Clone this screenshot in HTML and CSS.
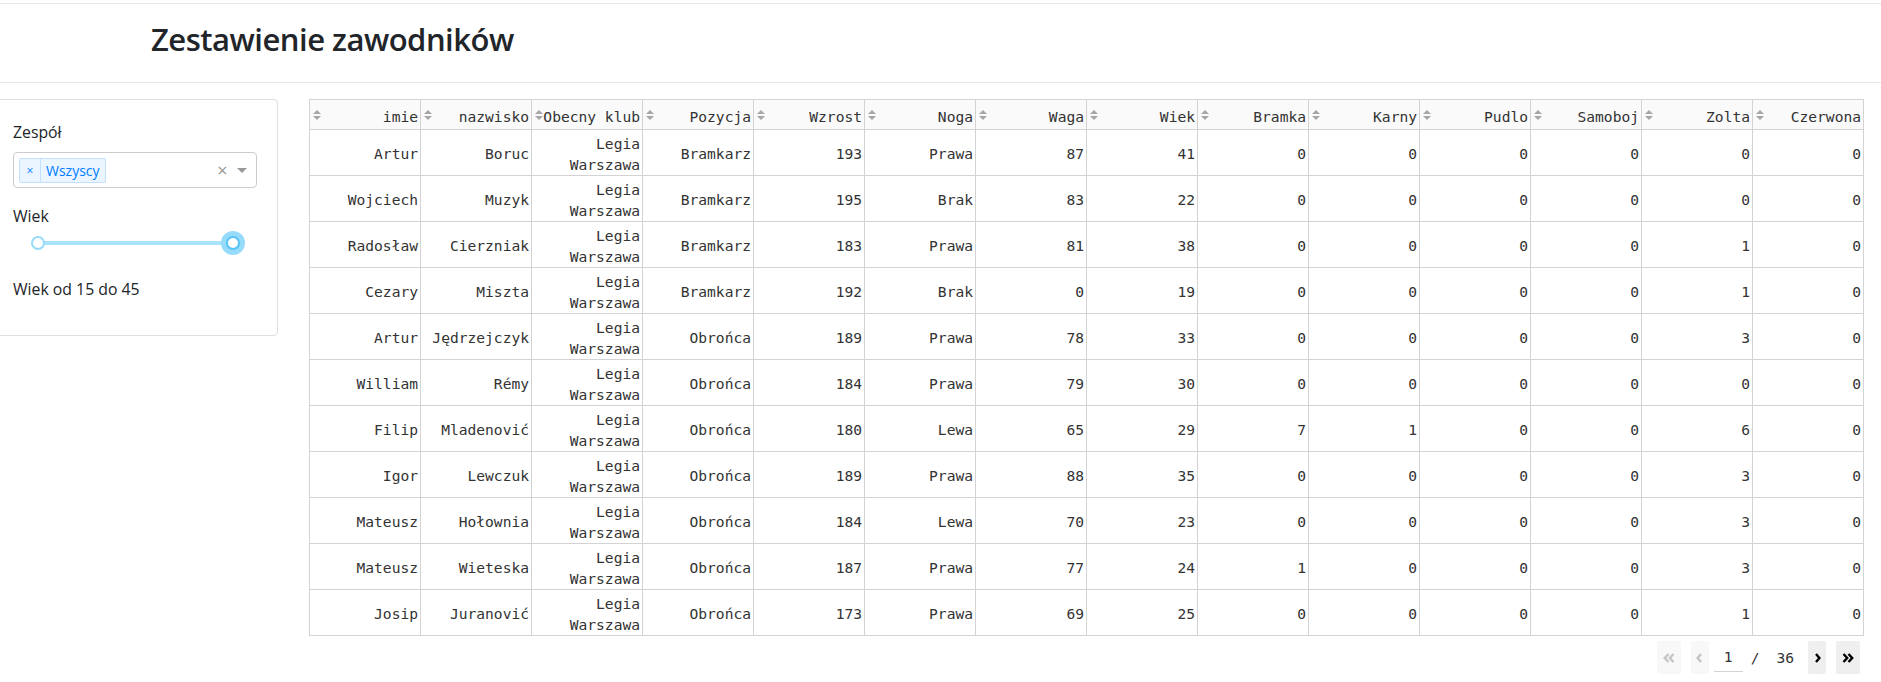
FILE: index.html
```html
<!DOCTYPE html>
<html lang="pl">
<head>
<meta charset="utf-8">
<title>Zestawienie zawodników</title>
<link rel="stylesheet" href="styles.css">
</head>
<body>
<header class="header">
  <h2 class="title">Zestawienie zawodników</h2>
</header>
<main class="main">
  <aside class="card">
    <div class="label">Zespół</div>
    <div class="select">
      <div class="select-values">
        <span class="tag"><span class="tag-x">×</span><span class="tag-label">Wszyscy</span></span>
      </div>
      <span class="select-clear">×</span>
      <span class="select-arrow"></span>
    </div>
    <div class="label label-wiek">Wiek</div>
    <div class="slider">
      <span class="handle"></span>
      <span class="slider-track"></span>
      <span class="handle handle-focus"></span>
    </div>
    <p class="range-text">Wiek od 15 do 45</p>
  </aside>
  <section class="table-area">
    <table class="grid">
      <thead>
        <tr>
          <th><div class="th-inner"><svg class="sort" viewBox="0 0 8 10"><path d="M4 0 L8 4 H0 Z M0 6 H8 L4 10 Z"/></svg><span>imie</span></div></th>
          <th><div class="th-inner"><svg class="sort" viewBox="0 0 8 10"><path d="M4 0 L8 4 H0 Z M0 6 H8 L4 10 Z"/></svg><span>nazwisko</span></div></th>
          <th><div class="th-inner"><svg class="sort" viewBox="0 0 8 10"><path d="M4 0 L8 4 H0 Z M0 6 H8 L4 10 Z"/></svg><span>Obecny klub</span></div></th>
          <th><div class="th-inner"><svg class="sort" viewBox="0 0 8 10"><path d="M4 0 L8 4 H0 Z M0 6 H8 L4 10 Z"/></svg><span>Pozycja</span></div></th>
          <th><div class="th-inner"><svg class="sort" viewBox="0 0 8 10"><path d="M4 0 L8 4 H0 Z M0 6 H8 L4 10 Z"/></svg><span>Wzrost</span></div></th>
          <th><div class="th-inner"><svg class="sort" viewBox="0 0 8 10"><path d="M4 0 L8 4 H0 Z M0 6 H8 L4 10 Z"/></svg><span>Noga</span></div></th>
          <th><div class="th-inner"><svg class="sort" viewBox="0 0 8 10"><path d="M4 0 L8 4 H0 Z M0 6 H8 L4 10 Z"/></svg><span>Waga</span></div></th>
          <th><div class="th-inner"><svg class="sort" viewBox="0 0 8 10"><path d="M4 0 L8 4 H0 Z M0 6 H8 L4 10 Z"/></svg><span>Wiek</span></div></th>
          <th><div class="th-inner"><svg class="sort" viewBox="0 0 8 10"><path d="M4 0 L8 4 H0 Z M0 6 H8 L4 10 Z"/></svg><span>Bramka</span></div></th>
          <th><div class="th-inner"><svg class="sort" viewBox="0 0 8 10"><path d="M4 0 L8 4 H0 Z M0 6 H8 L4 10 Z"/></svg><span>Karny</span></div></th>
          <th><div class="th-inner"><svg class="sort" viewBox="0 0 8 10"><path d="M4 0 L8 4 H0 Z M0 6 H8 L4 10 Z"/></svg><span>Pudlo</span></div></th>
          <th><div class="th-inner"><svg class="sort" viewBox="0 0 8 10"><path d="M4 0 L8 4 H0 Z M0 6 H8 L4 10 Z"/></svg><span>Samoboj</span></div></th>
          <th><div class="th-inner"><svg class="sort" viewBox="0 0 8 10"><path d="M4 0 L8 4 H0 Z M0 6 H8 L4 10 Z"/></svg><span>Zolta</span></div></th>
          <th><div class="th-inner"><svg class="sort" viewBox="0 0 8 10"><path d="M4 0 L8 4 H0 Z M0 6 H8 L4 10 Z"/></svg><span>Czerwona</span></div></th>
        </tr>
      </thead>
      <tbody>
        <tr><td>Artur</td><td>Boruc</td><td>Legia Warszawa</td><td>Bramkarz</td><td>193</td><td>Prawa</td><td>87</td><td>41</td><td>0</td><td>0</td><td>0</td><td>0</td><td>0</td><td>0</td></tr>
        <tr><td>Wojciech</td><td>Muzyk</td><td>Legia Warszawa</td><td>Bramkarz</td><td>195</td><td>Brak</td><td>83</td><td>22</td><td>0</td><td>0</td><td>0</td><td>0</td><td>0</td><td>0</td></tr>
        <tr><td>Radosław</td><td>Cierzniak</td><td>Legia Warszawa</td><td>Bramkarz</td><td>183</td><td>Prawa</td><td>81</td><td>38</td><td>0</td><td>0</td><td>0</td><td>0</td><td>1</td><td>0</td></tr>
        <tr><td>Cezary</td><td>Miszta</td><td>Legia Warszawa</td><td>Bramkarz</td><td>192</td><td>Brak</td><td>0</td><td>19</td><td>0</td><td>0</td><td>0</td><td>0</td><td>1</td><td>0</td></tr>
        <tr><td>Artur</td><td>Jędrzejczyk</td><td>Legia Warszawa</td><td>Obrońca</td><td>189</td><td>Prawa</td><td>78</td><td>33</td><td>0</td><td>0</td><td>0</td><td>0</td><td>3</td><td>0</td></tr>
        <tr><td>William</td><td>Rémy</td><td>Legia Warszawa</td><td>Obrońca</td><td>184</td><td>Prawa</td><td>79</td><td>30</td><td>0</td><td>0</td><td>0</td><td>0</td><td>0</td><td>0</td></tr>
        <tr><td>Filip</td><td>Mladenović</td><td>Legia Warszawa</td><td>Obrońca</td><td>180</td><td>Lewa</td><td>65</td><td>29</td><td>7</td><td>1</td><td>0</td><td>0</td><td>6</td><td>0</td></tr>
        <tr><td>Igor</td><td>Lewczuk</td><td>Legia Warszawa</td><td>Obrońca</td><td>189</td><td>Prawa</td><td>88</td><td>35</td><td>0</td><td>0</td><td>0</td><td>0</td><td>3</td><td>0</td></tr>
        <tr><td>Mateusz</td><td>Hołownia</td><td>Legia Warszawa</td><td>Obrońca</td><td>184</td><td>Lewa</td><td>70</td><td>23</td><td>0</td><td>0</td><td>0</td><td>0</td><td>3</td><td>0</td></tr>
        <tr><td>Mateusz</td><td>Wieteska</td><td>Legia Warszawa</td><td>Obrońca</td><td>187</td><td>Prawa</td><td>77</td><td>24</td><td>1</td><td>0</td><td>0</td><td>0</td><td>3</td><td>0</td></tr>
        <tr><td>Josip</td><td>Juranović</td><td>Legia Warszawa</td><td>Obrońca</td><td>173</td><td>Prawa</td><td>69</td><td>25</td><td>0</td><td>0</td><td>0</td><td>0</td><td>1</td><td>0</td></tr>
      </tbody>
    </table>
    <nav class="pager">
      <button class="pg-btn pg-wide pg-disabled" type="button"><svg viewBox="0 0 12 10" class="ico-dbl"><path d="M5.5 1 L1.8 5 L5.5 9 M10.5 1 L6.8 5 L10.5 9"/></svg></button>
      <button class="pg-btn pg-narrow pg-disabled pg-prev" type="button"><svg viewBox="0 0 7 10" class="ico-one"><path d="M5 1 L1.6 5 L5 9"/></svg></button>
      <span class="pg-current">1</span>
      <span class="pg-sep">/</span>
      <span class="pg-total">36</span>
      <button class="pg-btn pg-narrow pg-next" type="button"><svg viewBox="0 0 7 10" class="ico-one"><path d="M2 1 L5.4 5 L2 9"/></svg></button>
      <button class="pg-btn pg-wide pg-last" type="button"><svg viewBox="0 0 12 10" class="ico-dbl"><path d="M1.5 1 L5.2 5 L1.5 9 M6.5 1 L10.2 5 L6.5 9"/></svg></button>
    </nav>
  </section>
</main>
</body>
</html>
```

FILE: styles.css
```css
html, body {
  margin: 0;
  padding: 0;
  background: #fff;
}

body {
  font-family: "Open Sans", "Noto Sans", sans-serif;
  color: #212529;
  overflow: hidden;
}

.header {
  margin-top: 3px;
  height: 78px;
  border-top: 1px solid #e6e6e6;
  border-bottom: 1px solid #e6e6e6;
}

.title {
  margin: 0;
  padding: 16px 0 0 151px;
  font-size: 31px;
  font-weight: 600;
  line-height: 38px;
  letter-spacing: -0.5px;
  color: #212529;
}

.main {
  display: flex;
  align-items: flex-start;
  padding-top: 16px;
}

.card {
  flex: none;
  box-sizing: border-box;
  width: 284px;
  height: 237px;
  margin-left: -6px;
  padding: 21px 20px 0 18px;
  border: 1px solid #dfdfdf;
  border-radius: 4px;
  font-size: 15.8px;
}

.label {
  line-height: 22px;
}

.select {
  display: flex;
  align-items: flex-start;
  box-sizing: border-box;
  height: 36px;
  margin-top: 9px;
  border: 1px solid #cccccc;
  border-radius: 4px;
}

.select-values {
  flex: 1;
  padding: 5px 0 0 5px;
}

.tag {
  display: inline-flex;
  border: 1px solid #c2e0ff;
  border-radius: 2px;
  background: #ebf5ff;
  color: #007eff;
  font-size: 14px;
  line-height: 19px;
}

.tag-x {
  width: 10px;
  padding: 2px 5px;
  text-align: center;
  font-size: 12px;
  border-right: 1px solid #c2e0ff;
}

.tag-label {
  padding: 2px 5px;
}

.select-clear {
  align-self: center;
  width: 17px;
  text-align: center;
  font-size: 18px;
  line-height: 18px;
  color: #999;
}

.select-arrow {
  align-self: center;
  width: 0;
  height: 0;
  margin: 3px 9px 0 6px;
  border-style: solid;
  border-width: 5px 5px 2.5px;
  border-color: #999 transparent transparent;
}

.label-wiek {
  margin-top: 17px;
}

.slider {
  display: flex;
  align-items: center;
  width: 209px;
  height: 24px;
  margin: 4px 0 0 18px;
}

.handle {
  position: relative;
  z-index: 1;
  flex: none;
  box-sizing: border-box;
  width: 14px;
  height: 14px;
  border: 2px solid #96dbfa;
  border-radius: 50%;
  background: #fff;
}

.handle-focus {
  border-color: #57c5f7;
  box-shadow: 0 0 0 5px #96dbfa;
}

.slider-track {
  flex: 1;
  height: 4px;
  margin: 0 -7px;
  border-radius: 4px;
  background: #abe2fb;
}

.range-text {
  margin: 23px 0 0;
  line-height: 22px;
}

.table-area {
  flex: none;
  margin-left: 31px;
  width: 1555px;
}

.grid {
  table-layout: fixed;
  width: 1555px;
  border-collapse: separate;
  border-spacing: 0;
  border-top: 1px solid #d3d3d3;
  border-left: 1px solid #d3d3d3;
  font-family: "DejaVu Sans Mono", "Liberation Mono", monospace;
  font-size: 14.6px;
  color: #333333;
}

.grid th,
.grid td {
  box-sizing: border-box;
  width: 111px;
  padding: 4px 2px 0 2px;
  border-right: 1px solid #d3d3d3;
  border-bottom: 1px solid #d3d3d3;
  text-align: right;
  vertical-align: middle;
}

.grid th {
  background: #fafafa;
  font-weight: normal;
  line-height: 25px;
}

.grid td {
  line-height: 20.5px;
}

.th-inner {
  display: flex;
  align-items: center;
}

.th-inner span {
  flex: 1;
  white-space: nowrap;
}

.sort {
  flex: none;
  width: 8px;
  height: 10px;
  margin: -4px 0 0 1px;
  fill: #a6a6a6;
}

.pager {
  display: flex;
  justify-content: flex-end;
  align-items: center;
  margin-top: 5px;
  padding-right: 4px;
  font-family: "DejaVu Sans Mono", "Liberation Mono", monospace;
  font-size: 14.6px;
  color: #333333;
}

.pg-btn {
  display: flex;
  align-items: center;
  justify-content: center;
  height: 33px;
  padding: 0;
  border: none;
  border-radius: 2px;
  background: #efefef;
}

.pg-wide {
  width: 24px;
}

.pg-narrow {
  width: 18px;
}

.pg-disabled {
  background: #f8f8f8;
}

.pg-btn svg {
  fill: none;
  stroke: #000;
  stroke-width: 2.4;
}

.pg-disabled svg {
  stroke: #c4c4c4;
}

.ico-dbl {
  width: 12px;
  height: 10px;
}

.ico-one {
  width: 7px;
  height: 10px;
}

.pg-prev {
  margin-left: 10px;
}

.pg-current {
  width: 29px;
  margin-left: 5px;
  text-align: center;
  line-height: 28px;
  border-bottom: 1px solid #d3d3d3;
}

.pg-sep {
  margin-left: 8px;
}

.pg-total {
  margin-left: 17px;
}

.pg-next {
  margin-left: 14px;
}

.pg-last {
  margin-left: 10px;
}
```
